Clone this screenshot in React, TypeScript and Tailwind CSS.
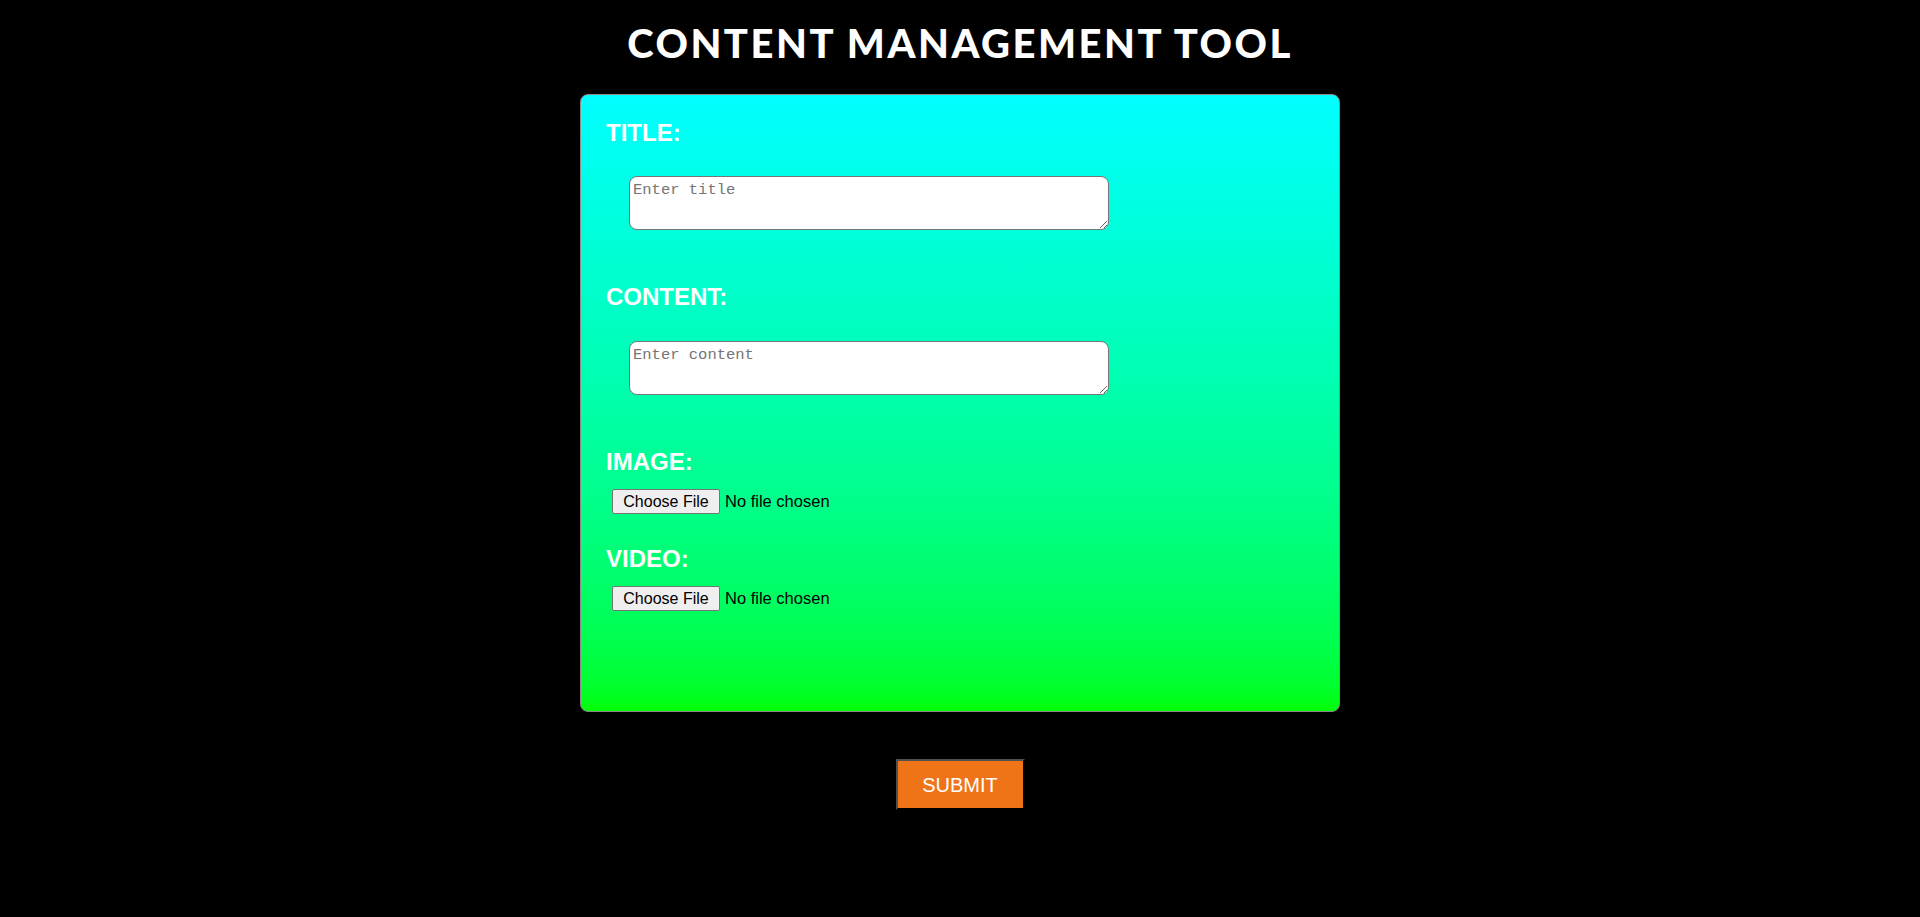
import React from "react";

const labelCls =
  "block text-[24px] leading-[28px] font-bold text-white font-['Liberation_Sans',Arial,sans-serif]";

const areaCls =
  "block ml-[23px] w-[480px] h-[54px] rounded-[8px] border border-[#767676] bg-white px-[3px] pt-[4px] text-[15.5px] leading-[18px] text-black font-['Liberation_Mono','DejaVu_Sans_Mono',monospace] placeholder:text-[#757575] outline-none";

const fileCls =
  "block ml-[6px] text-[16.5px] leading-[20px] text-black font-['Liberation_Sans',Arial,sans-serif] file:mr-[5px] file:h-[25px] file:w-[108px] file:rounded-[2px] file:border file:border-[#767676] file:bg-[#efefef] file:px-[6px] file:text-[16px] file:text-black";

export default function App() {
  return (
    <div className="min-h-screen bg-black flex flex-col items-center">
      <h1 className="pt-[19px] text-[40px] leading-[48px] font-black tracking-[2.5px] text-white font-['Lato',sans-serif]">
        CONTENT MANAGEMENT TOOL
      </h1>

      <form className="mt-[27px] flex flex-col items-center" onSubmit={(e) => e.preventDefault()}>
        <div className="w-[760px] h-[618px] rounded-[8px] border border-[#8a8a8a] bg-gradient-to-b from-[#00ffff] to-[#00ff00] pl-[25px] pt-[24px]">
          <label className={labelCls}>TITLE:</label>
          <textarea className={`${areaCls} mt-[29px]`} placeholder="Enter title" />

          <label className={`${labelCls} mt-[53px]`}>CONTENT:</label>
          <textarea className={`${areaCls} mt-[30px]`} placeholder="Enter content" />

          <label className={`${labelCls} mt-[53px]`}>IMAGE:</label>
          <input type="file" className={`${fileCls} mt-[13px]`} />

          <label className={`${labelCls} mt-[31px]`}>VIDEO:</label>
          <input type="file" className={`${fileCls} mt-[13px]`} />
        </div>

        <button
          type="submit"
          className="mt-[47px] w-[129px] h-[51px] bg-[#ef7418] border-2 border-t-[#505050] border-l-[#505050] border-b-black border-r-black text-[20px] text-white font-['Liberation_Sans',Arial,sans-serif]"
        >
          SUBMIT
        </button>
      </form>
    </div>
  );
}
